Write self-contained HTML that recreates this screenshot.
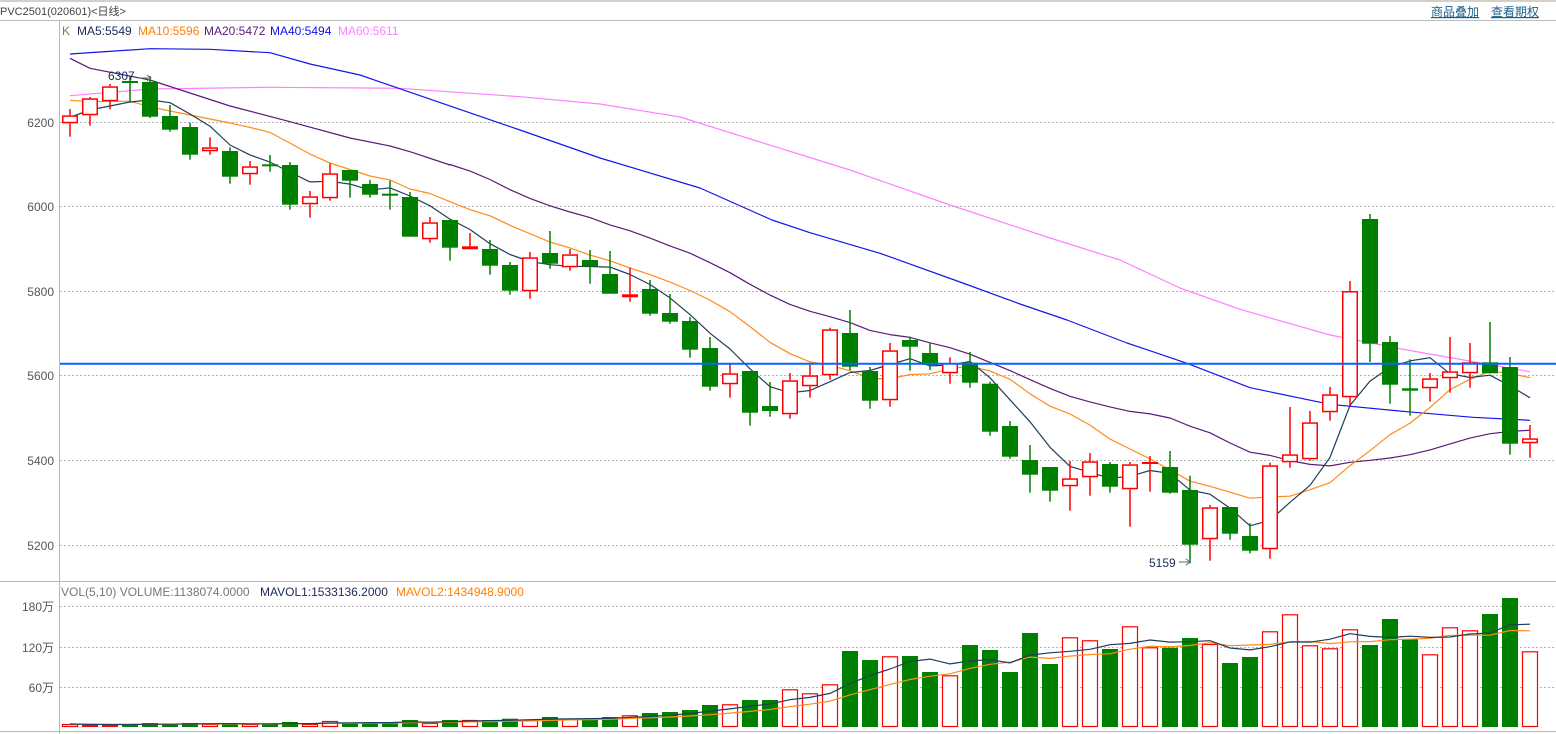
<!DOCTYPE html>
<html><head><meta charset="utf-8"><style>
html,body{margin:0;padding:0;background:#fff;width:1556px;height:734px;overflow:hidden;font-family:"Liberation Sans","Noto Sans CJK SC",sans-serif}
</style></head><body>
<svg id="s" width="1556" height="734" xmlns="http://www.w3.org/2000/svg" style="position:absolute;left:0;top:0">
<rect x="0" y="0" width="1556" height="2" fill="#d4d0c8"/>
<text x="0" y="15" font-size="11" fill="#444" font-family="Liberation Sans,Noto Sans CJK SC,sans-serif">PVC2501(020601)&lt;日线&gt;</text>
<text x="1431" y="16" font-size="12" fill="#1a5f8a" font-family="Liberation Sans,Noto Sans CJK SC,sans-serif" text-decoration="underline">商品叠加</text>
<text x="1491" y="16" font-size="12" fill="#1a5f8a" font-family="Liberation Sans,Noto Sans CJK SC,sans-serif" text-decoration="underline">查看期权</text>
<line x1="0" y1="20.5" x2="1556" y2="20.5" stroke="#bbb"/>
<line x1="59.5" y1="21" x2="59.5" y2="734" stroke="#b8b8b8"/>
<line x1="0" y1="581.5" x2="1556" y2="581.5" stroke="#b8b8b8"/>
<line x1="0" y1="731.5" x2="1556" y2="731.5" stroke="#b8b8b8"/>
<g font-size="12" font-family="Liberation Sans,Noto Sans CJK SC,sans-serif">
<text x="62" y="35" fill="#777">K</text>
<text x="77" y="35" fill="#1a2a5a">MA5:5549</text>
<text x="138" y="35" fill="#ff8000">MA10:5596</text>
<text x="204" y="35" fill="#5a1a7a">MA20:5472</text>
<text x="270" y="35" fill="#1010ee">MA40:5494</text>
<text x="338" y="35" fill="#ff80ff">MA60:5611</text>
<text x="61" y="596" fill="#777">VOL(5,10) VOLUME:1138074.0000</text>
<text x="260" y="596" fill="#1a2a5a">MAVOL1:1533136.2000</text>
<text x="396" y="596" fill="#ff8000">MAVOL2:1434948.9000</text>
</g>
<g id="g"></g>
</svg>
<script>
var S=document.getElementById('g'),h='';
function L(x1,y1,x2,y2,c,w,d){h+='<line x1="'+x1+'" y1="'+y1+'" x2="'+x2+'" y2="'+y2+'" stroke="'+c+'" stroke-width="'+(w||1)+'"'+(d?' stroke-dasharray="'+d+'"':'')+'/>';}
function T(x,y,t,c,a){h+='<text x="'+x+'" y="'+y+'" font-size="12" fill="'+c+'" text-anchor="'+(a||'start')+'" font-family="Liberation Sans,Noto Sans CJK SC,sans-serif">'+t+'</text>';}
// grid
[[122,'6200'],[206,'6000'],[291,'5800'],[375,'5600'],[460,'5400'],[545,'5200']].forEach(function(g){L(60,g[0]+.5,1556,g[0]+.5,'#b4b4b4',1,'2,2');T(54,g[0]+5,g[1],'#555','end');});
[[606,'180万'],[647,'120万'],[687,'60万']].forEach(function(g){L(60,g[0]+.5,1556,g[0]+.5,'#b4b4b4',1,'2,2');T(54,g[0]+5,g[1],'#555','end');});
var C=[['r',115.3,123.3,109,136.7],['r',98.3,115.3,97,125.7],['r',86.3,101.3,84,109.3],['g',81,82.7,76.7,102.7],['g',82,116.7,76,118],
['g',116,129.7,105,131.7],['g',127,154.7,122.7,159.7],['r',147.3,151.3,137.3,154.7],['g',151,176.7,147.3,183.7],['r',166.3,174.3,161,184.7],
['g',164.3,165.7,155,171.7],['g',165,204.7,162,209.7],['r',196.3,204.3,191,217.7],['r',173.3,198.3,163.3,200.7],['g',170,180.7,170,197.7],
['g',184,194.7,180,197.7],['g',193.7,194.7,180.7,209.7],['g',197,236.7,192,236.7],['r',222.3,239.3,217,242.7],['g',220,247.7,220,260.7],
['r',246.3,249.3,233,249.3],['g',249,265.7,240,274.7],['g',265,290.7,262,294.7],['r',257.3,291.3,252,298.7],['g',253,263.7,231,268.7],
['r',254.3,267.3,249,270.7],['g',260,266.3,250,283.7],['g',274,293.7,251,293.7],['r',294.3,297.3,267.7,301.7],['g',289,313.7,280,315.7],
['g',313,321.7,294,323.7],['g',321,349.7,317,357.7],['g',348,386.7,337,390.7],['r',373.3,384.3,364,397.7],['g',371,412.7,371,425.7],
['g',406,411,382,416.7],['r',380.3,414.3,373,418.7],['r',375.3,386.3,364.7,397.7],['r',329.3,375.3,327.7,379.7],['g',333,366.7,310,370],
['g',371,400.7,367,408.7],['r',350.3,400.3,343,406.7],['g',340,346.7,336.7,370.7],['g',353,365,342.7,370],['r',363,373.3,357.3,383.7],
['g',362.7,382.7,352,387.7],['g',383.7,431.7,381.7,435.7],['g',426,456.7,421,458.7],['g',460,474.7,445,492.7],['g',467,490.7,467,501.7],
['r',478.3,486.3,461,510.7],['r',461.3,477.3,453,495.7],['g',464,486.7,462,492.7],['r',464.3,489.3,462,526.7],['r',462,463.7,456,491.7],
['g',467,492.7,451,493.7],['g',490,544.7,475.7,563.3],['r',507.3,539.3,505,560.7],['g',507,533.7,507,539.7],['g',536,550.7,523.3,553.3],
['r',465.3,549.3,462.7,558.7],['r',454.3,462.3,407,467.7],['r',422.3,459.3,411,460.7],['r',394.3,412.3,387,420.7],['r',291,397.3,281,405.7],
['g',219,343.7,214,362],['g',342,384.7,336,403.7],['g',388.3,390.7,359.3,415.7],['r',378.3,388.3,373,401.7],['r',371.3,378.3,337,392.7],
['r',362.3,373.3,343,387.7],['g',362.3,373.3,322,373.3],['g',367,443.7,357,454.7],['r',438.3,443.3,425,457.7]];
var V=[724,724.7,724.7,724.7,723,724,723,724,724,724,724,722,724,721,723,723,722,720,723,720,720,720,718.7,720,717,718.7,718.7,
717,715.3,713,712,710,705,704.3,700,700,689.3,693.3,684.3,651,660,656.3,656,672,675.3,645,650,672,633,664,637.3,
640.3,649,626.3,647.3,647.7,638,644,663,657,631.3,614.3,645.3,648.3,629.3,645,619,639.3,654.3,627.3,630.3,614,598,651.3];
function X(i){return 70+20*i;}
var cl=C.map(function(c){return c[0]=='r'?c[1]:c[2];});
function ma(arr,n,i){var s=0,k=0;for(var j=Math.max(0,i-n+1);j<=i;j++){s+=arr[j];k++;}return s/k;}
function poly(pts,c,w){h+='<polyline fill="none" stroke="'+c+'" stroke-width="'+(w||1)+'" stroke-linejoin="round" points="'+pts.map(function(p){return p[0].toFixed(1)+','+p[1].toFixed(1);}).join(' ')+'"/>';}
// MA60
poly([[70,95.7],[150,89],[270,87.3],[400,88.3],[520,96.7],[600,104],[680,117],[760,142],[850,170],[950,205],[1050,238],[1120,260],[1180,288],[1240,309.3],[1330,335],[1407,350],[1530,371.7]],'#ff80ff',1.2);
// MA40
poly([[70,54],[150,48.7],[210,49.3],[270,52.7],[310,64],[360,75],[452,106.7],[520,130],[600,158],[700,188],[772,220],[810,232.7],[880,253.3],[960,282],[1020,304],[1067,320],[1127,343],[1187,363.3],[1250,387.7],[1330,404.3],[1407,411.7],[1473,417.3],[1530,420.3]],'#1515f0',1.2);
// MA20
var p20=[[70,58.3],[90,68.3],[150,80],[230,106],[290,121.7],[350,138],[390,146],[410,151.7],[450,165]];
for(var i=19;i<C.length;i++)p20.push([X(i),ma(cl,20,i)]);
poly(p20,'#5a1a7a',1.2);
// MA10
var t10=[100.3,101.5,101.3,101.3,106.7,111,115,119,123];var p10=[];
for(var i=0;i<C.length;i++)p10.push([X(i),i<9?t10[i]:ma(cl,10,i)]);
poly(p10,'#ff8c1a',1.2);
// MA5
var t5=[117.3,110,106,102];var p5=[];
for(var i=0;i<C.length;i++)p5.push([X(i),i<4?t5[i]:ma(cl,5,i)]);
poly(p5,'#1f3d5c',1.2);
// candles
C.forEach(function(c,i){var x=X(i),col=c[0]=='r'?'#ff0000':'#008000';
var t=c[1],b=c[2];
if(c[0]=='r'){L(x,c[3],x,t,col,1.5);L(x,b,x,c[4],col,1.5);
 if(b-t<2.5){h+='<rect x="'+(x-8)+'" y="'+t+'" width="16" height="'+Math.max(b-t,2)+'" fill="'+col+'"/>';}
 else h+='<rect x="'+(x-7.25)+'" y="'+(t+.75)+'" width="14.5" height="'+(b-t-1.5)+'" fill="#fff" stroke="'+col+'" stroke-width="1.5"/>';}
else{L(x,c[3],x,c[4],col,1.5);h+='<rect x="'+(x-8)+'" y="'+t+'" width="16" height="'+Math.max(b-t,2)+'" fill="'+col+'"/>';}
});
// blue line
L(60,363.7,1556,363.7,'#0a64ff',2);
// labels
T(108,80,'6307','#1a2a5a');L(137,78,150,78,'#666',1);h+='<path d="M147,75 L151,78 L147,81" fill="none" stroke="#666"/>';
T(1149,567,'5159','#1a2a5a');L(1179,562,1190,562,'#666',1);h+='<path d="M1186,559 L1190,562 L1186,565" fill="none" stroke="#666"/>';
// volume
V.forEach(function(v,i){var x=X(i),c=C[i][0];var bt=727;
if(c=='g'||bt-v<3)h+='<rect x="'+(x-8)+'" y="'+v+'" width="16" height="'+(bt-v)+'" fill="'+(c=='g'?'#008000':'#ff0000')+'"/>';
else h+='<rect x="'+(x-7.5)+'" y="'+(v+.5)+'" width="15" height="'+(bt-v-1)+'" fill="#fff" stroke="#ff0000" stroke-width="1.2"/>';});
var m1=[],m2=[];for(var i=0;i<V.length;i++){m1.push([X(i),ma(V,5,i)]);m2.push([X(i),ma(V,10,i)]);}
poly(m2,'#ff8c1a',1.2);poly(m1,'#1f3d5c',1.2);
S.innerHTML=h;
</script>
</body></html>
